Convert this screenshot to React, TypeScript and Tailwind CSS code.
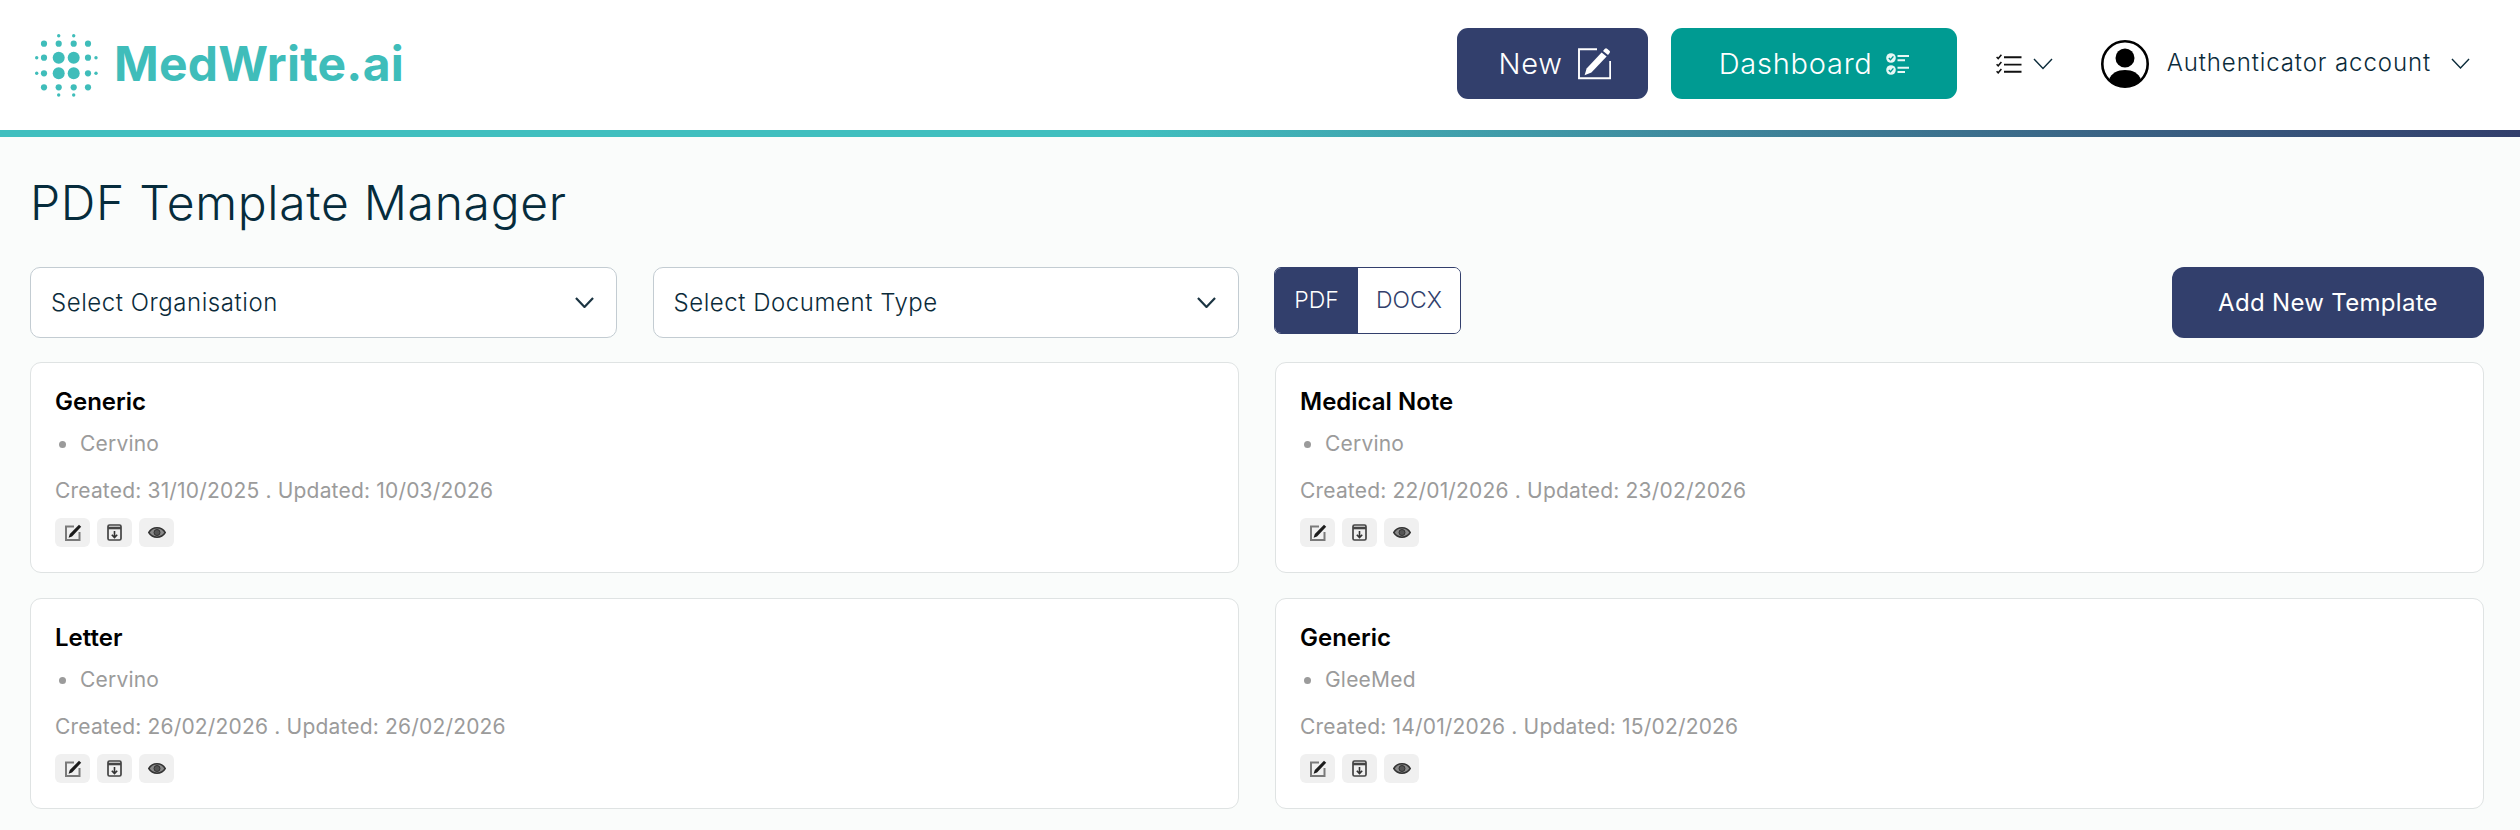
import React from "react";

const FONT = "font-['Inter','Liberation_Sans',sans-serif]";

function Logo() {
  const small = [[58.7,34.7],[73.7,34.7],[36.7,56.7],[96,56.7],[36.7,72.3],[96,72.3],[58.7,94],[73.7,94]];
  const mid = [[44,42.7],[58.7,42.7],[73.7,42.7],[88,42.7],[44,56.7],[88,56.7],[44,72.3],[88,72.3],[44,86.3],[58.7,86.3],[73.7,86.3],[88,86.3]];
  const big = [[58.7,56.7],[73.7,56.7],[58.7,72.3],[73.7,72.3]];
  return (
    <svg width="72" height="72" viewBox="30 28 72 72" className="mt-[3px] shrink-0">
      <g fill="#3fbdba">
        {small.map(([x,y],i)=><circle key={i} cx={x} cy={y} r="1.7"/>)}
        {mid.map(([x,y],i)=><circle key={i} cx={x} cy={y} r="3.1"/>)}
        {big.map(([x,y],i)=><circle key={i} cx={x} cy={y} r="6"/>)}
      </g>
    </svg>
  );
}

function NoteIcon() {
  return (
    <svg width="34" height="33" viewBox="0 0 34 33" fill="none" className="shrink-0">
      <path d="M20 2.2H2v29h31.2V14" stroke="#fff" strokeWidth="1.9"/>
      <path d="M24.6 5.6l5 4L14.4 25.6 7.6 28.2 9.6 21.4z" fill="#fff"/>
      <path d="M26 3.9l1.9-2.1a1.6 1.6 0 0 1 2.2-.1l2.4 2a1.6 1.6 0 0 1 .1 2.2L31 8z" fill="#fff"/>
    </svg>
  );
}

function DashIcon() {
  return (
    <svg width="23" height="22" viewBox="0 0 23 22" fill="none" className="shrink-0">
      <circle cx="5" cy="5" r="4.8" fill="#e8f7f5"/>
      <circle cx="5" cy="17" r="4.8" fill="#e8f7f5"/>
      <path d="M2.8 5l1.7 1.7L7.4 3.4M2.8 17l1.7 1.7 2.9-3.3" stroke="#009b92" strokeWidth="1.4"/>
      <path d="M11.5 3h11.5M11.5 7.2h7.5M11.5 14.8h11.5M11.5 19h7.5" stroke="#e8f7f5" strokeWidth="2.1"/>
    </svg>
  );
}

function ListCheck() {
  return (
    <svg width="26" height="20" viewBox="0 0 26 20" fill="none" className="shrink-0">
      <path d="M8 3.2h17.5M8 10.6h17.5M8 17.8h17.5" stroke="#111" strokeWidth="1.9"/>
      <path d="M.6 3l1.6 1.6L5.4.8M.6 10.2l1.6 1.6 3.2-3.8M.6 17.2l1.6 1.6 3.2-3.8" stroke="#111" strokeWidth="1.5"/>
    </svg>
  );
}

function Chevron({ w = 20, color = "#0b2b3a", sw = 1.6 }: { w?: number; color?: string; sw?: number }) {
  return (
    <svg width={w} height={w * 0.6} viewBox="0 0 20 12" fill="none" className="shrink-0">
      <path d="M1 1l9 9.5L19 1" stroke={color} strokeWidth={sw * 20 / w}/>
    </svg>
  );
}

function Avatar() {
  return (
    <svg width="48" height="48" viewBox="0 0 48 48" fill="none" className="shrink-0">
      <circle cx="24" cy="24" r="22.7" stroke="#000" strokeWidth="2.6"/>
      <circle cx="24" cy="18" r="9.5" fill="#000"/>
      <path d="M8 39.5C10.5 33 16.5 30 24 30s13.5 3 16 9.5A22.6 22.6 0 0 1 24 47 22.6 22.6 0 0 1 8 39.5z" fill="#000"/>
    </svg>
  );
}

function Select({ label }: { label: string }) {
  return (
    <div className="flex h-[71px] flex-1 items-center justify-between rounded-[10px] border border-[#c3ccd2] bg-white pl-[20px] pr-[22px]">
      <span className="text-[24px] font-light tracking-[0.55px] text-[#0b2b3a]">{label}</span>
      <Chevron w={19} color="#1b3442" sw={2.2} />
    </div>
  );
}

function ActionButton({ children }: { children: React.ReactNode }) {
  return (
    <div className="flex h-[29px] w-[35px] items-center justify-center rounded-[6px] bg-[#f0f0f0]">{children}</div>
  );
}

function Card({ title, org, created, updated }: { title: string; org: string; created: string; updated: string }) {
  return (
    <div className="flex h-[211px] flex-col rounded-[11px] border border-[#dfe3e3] bg-white px-[24px] pt-[24px]">
      <div className="text-[24px] leading-[30px] font-semibold text-black">{title}</div>
      <div className="mt-[13px] flex h-[28px] items-center text-[21px] tracking-[0.2px] text-[#9b9b9b]">
        <span className="ml-[4px] h-[7px] w-[7px] rounded-full bg-[#9b9b9b]" />
        <span className="ml-[14px]">{org}</span>
      </div>
      <div className="mt-[19px] h-[28px] text-[21px] leading-[28px] tracking-[0.18px] text-[#9b9b9b]">
        Created: {created} . Updated: {updated}
      </div>
      <div className="mt-[13px] flex gap-[7px]">
        <ActionButton>
          <svg width="18" height="18" viewBox="0 0 18 18" fill="none">
            <path d="M10 2.5H2v13.5h13.5V8" stroke="#7a7a7a" strokeWidth="2"/>
            <path d="M15 .8l2.2 2L8 12.5l-3.4 1.2L5.8 10z" fill="#1c1c1c"/>
          </svg>
        </ActionButton>
        <ActionButton>
          <svg width="15" height="17" viewBox="0 0 15 17" fill="none">
            <rect x="1" y="1" width="13" height="15" rx="1.5" stroke="#444" strokeWidth="1.7"/>
            <path d="M1 4h13" stroke="#444" strokeWidth="2.6"/>
            <path d="M7.5 7v6.5M4.8 10.8l2.7 2.8 2.7-2.8" stroke="#333" strokeWidth="1.6"/>
          </svg>
        </ActionButton>
        <ActionButton>
          <svg width="18" height="11" viewBox="0 0 18 11" fill="none">
            <path d="M.8 5.5C2.8 2.2 5.6.8 9 .8s6.2 1.4 8.2 4.7C15.2 8.8 12.4 10.2 9 10.2S2.8 8.8.8 5.5z" fill="#8a8a8a" stroke="#333" strokeWidth="1.5"/>
            <circle cx="9" cy="5.5" r="3" fill="#555" stroke="#333" strokeWidth="1"/>
          </svg>
        </ActionButton>
      </div>
    </div>
  );
}

const cards = [
  { title: "Generic", org: "Cervino", created: "31/10/2025", updated: "10/03/2026" },
  { title: "Medical Note", org: "Cervino", created: "22/01/2026", updated: "23/02/2026" },
  { title: "Letter", org: "Cervino", created: "26/02/2026", updated: "26/02/2026" },
  { title: "Generic", org: "GleeMed", created: "14/01/2026", updated: "15/02/2026" },
];

export default function App() {
  return (
    <div className={`min-h-screen bg-[#fafcfb] ${FONT}`}>
      <header className="flex h-[130px] items-center justify-between bg-white pb-[3px] pl-[30px] pr-[50px]">
        <div className="flex items-center gap-[12px]">
          <Logo />
          <span className="text-[48px] leading-none font-bold tracking-[0.25px] text-[#3fbdba]">MedWrite.ai</span>
        </div>
        <div className="flex items-center">
          <button className="flex h-[71px] w-[191px] items-center justify-center gap-[14px] rounded-[11px] bg-[#323f6c] pl-[5px] text-[29px] font-light tracking-[0.75px] text-white">
            New <NoteIcon />
          </button>
          <button className="ml-[23px] flex h-[71px] w-[286px] items-center justify-center gap-[13px] rounded-[11px] bg-[#009b92] text-[29px] font-light tracking-[0.75px] text-white">
            Dashboard <DashIcon />
          </button>
          <div className="ml-[39px] flex items-center gap-[11px]">
            <ListCheck />
            <Chevron w={20} sw={1.4} />
          </div>
          <div className="ml-[48px] flex items-center">
            <Avatar />
            <span className="ml-[18px] -mt-[2px] text-[24px] font-light tracking-[0.9px] text-[#0b2b3a]">Authenticator account</span>
            <span className="ml-[20px]"><Chevron w={19} sw={1.4} /></span>
          </div>
        </div>
      </header>
      <div className="h-[7px] bg-linear-to-r from-[#40bfbf] from-45% to-[#323f6c]" />
      <main className="pl-[30px] pr-[36px]">
        <h1 className="pt-[32px] text-[48px] leading-[68px] font-light tracking-[0.7px] text-[#062c3c]">PDF Template Manager</h1>
        <div className="mt-[30px] grid grid-cols-2 gap-x-[36px]">
          <div className="flex gap-[36px]">
            <Select label="Select Organisation" />
            <Select label="Select Document Type" />
          </div>
          <div className="flex items-start justify-between">
            <div className="-ml-px flex h-[67px] overflow-hidden rounded-[7px] border border-[#323f6c] text-[23px] font-light">
              <div className="flex w-[83px] items-center justify-center bg-[#323f6c] text-white">PDF</div>
              <div className="flex w-[102px] items-center justify-center bg-white text-[#323f6c]">DOCX</div>
            </div>
            <button className="h-[71px] w-[312px] rounded-[12px] bg-[#323f6c] text-[24px] tracking-[0.3px] text-white">Add New Template</button>
          </div>
        </div>
        <div className="mt-[24px] grid grid-cols-2 gap-x-[36px] gap-y-[25px]">
          {cards.map((c, i) => <Card key={i} {...c} />)}
        </div>
      </main>
    </div>
  );
}
